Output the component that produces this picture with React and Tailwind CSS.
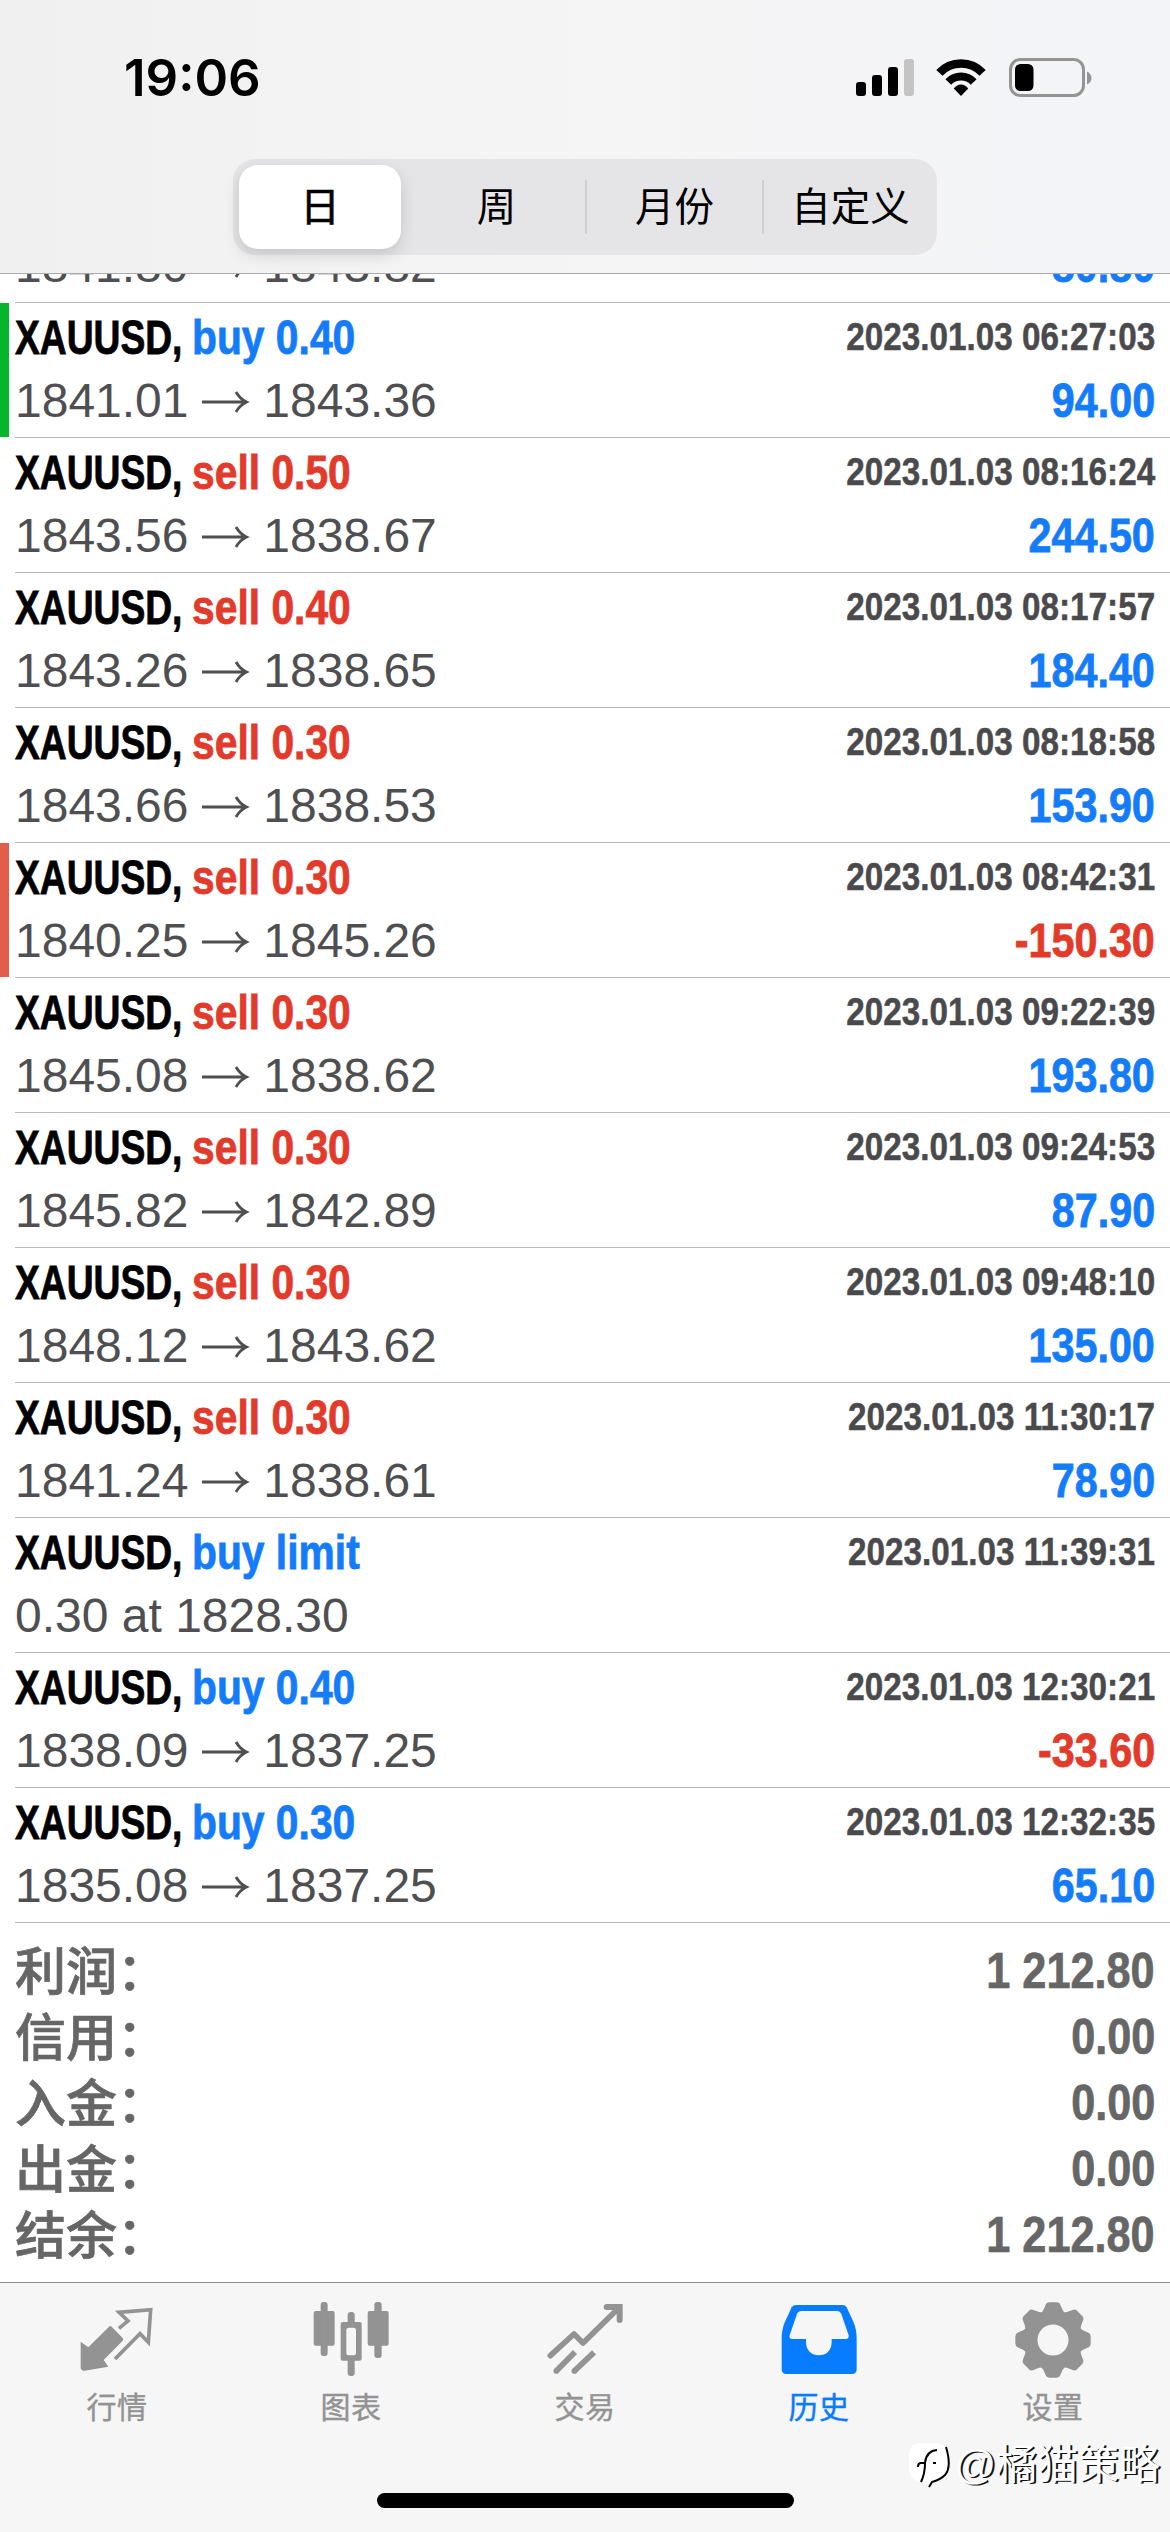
import React from "react";

const deals = [
    { action: "buy 0.40", side: "buy", open: "1841.80", close: "1843.82", time: "2023.01.03 06:26:14", profit: "80.80" },
    { action: "buy 0.40", side: "buy", open: "1841.01", close: "1843.36", time: "2023.01.03 06:27:03", profit: "94.00", mark: "tp" },
    { action: "sell 0.50", side: "sell", open: "1843.56", close: "1838.67", time: "2023.01.03 08:16:24", profit: "244.50" },
    { action: "sell 0.40", side: "sell", open: "1843.26", close: "1838.65", time: "2023.01.03 08:17:57", profit: "184.40" },
    { action: "sell 0.30", side: "sell", open: "1843.66", close: "1838.53", time: "2023.01.03 08:18:58", profit: "153.90" },
    { action: "sell 0.30", side: "sell", open: "1840.25", close: "1845.26", time: "2023.01.03 08:42:31", profit: "-150.30", mark: "sl" },
    { action: "sell 0.30", side: "sell", open: "1845.08", close: "1838.62", time: "2023.01.03 09:22:39", profit: "193.80" },
    { action: "sell 0.30", side: "sell", open: "1845.82", close: "1842.89", time: "2023.01.03 09:24:53", profit: "87.90" },
    { action: "sell 0.30", side: "sell", open: "1848.12", close: "1843.62", time: "2023.01.03 09:48:10", profit: "135.00" },
    { action: "sell 0.30", side: "sell", open: "1841.24", close: "1838.61", time: "2023.01.03 11:30:17", profit: "78.90" },
    { action: "buy limit", side: "buy", note: "0.30 at 1828.30", time: "2023.01.03 11:39:31" },
    { action: "buy 0.40", side: "buy", open: "1838.09", close: "1837.25", time: "2023.01.03 12:30:21", profit: "-33.60" },
    { action: "buy 0.30", side: "buy", open: "1835.08", close: "1837.25", time: "2023.01.03 12:32:35", profit: "65.10" },
];

const totals = [
    ["利润：", "1 212.80"],
    ["信用：", "0.00"],
    ["入金：", "0.00"],
    ["出金：", "0.00"],
    ["结余：", "1 212.80"],
];

export default function App() {
    return (
        <div className="relative flex h-[2532px] w-[1170px] flex-col overflow-hidden bg-white font-['Liberation_Sans','Noto_Sans_CJK_SC',sans-serif]">
            <header className="h-[274px] shrink-0 border-b border-[#ababad] bg-linear-to-r from-[#f0f0f1] via-[#f5f5f5] to-[#f3f4f8]">
                <StatusBar />
                <PeriodTabs />
            </header>
            {/* scrolled to the end, so the oldest row is cut by the header */}
            <main className="flex h-[2008px] shrink-0 flex-col justify-end overflow-hidden">
                {deals.map((deal) => (
                    <DealRow key={deal.time} deal={deal} />
                ))}
                <Totals />
            </main>
            <BottomNav />
            <Watermark />
        </div>
    );
}

function StatusBar() {
    return (
        <div className="flex h-[159px] items-start justify-between pl-[124px] pr-[78px] pt-[47px]">
            <span className="font-[Inter] text-[51px] font-semibold leading-[62px] text-black">19:06</span>
            <svg className="mt-[9px]" width="238" height="44" viewBox="854 56 238 44">
                <rect x="856" y="82" width="10" height="14" rx="3" />
                <rect x="872" y="75" width="10" height="21" rx="3" />
                <rect x="888" y="67" width="10" height="29" rx="3" />
                <rect x="904" y="59" width="10" height="37" rx="3" fill="#c4c4c4" />
                <path d="M939.4 72.9A29.5 29.5 0 0 1 982.6 72.9" fill="none" stroke="#000" strokeWidth="8.5" />
                <path d="M948.3 82A17.5 17.5 0 0 1 973.7 82" fill="none" stroke="#000" strokeWidth="8" />
                <path d="M961 96L953.8 88.6Q957 84.5 961 84.5T968.2 88.6Z" />
                <rect x="1010.5" y="59.5" width="73" height="36" rx="10" fill="none" stroke="#949495" strokeWidth="3" />
                <rect x="1015" y="64" width="18.5" height="27" rx="5.5" />
                <path d="M1087 71.5Q1091.500 74 1091.500 78T1087 84.500Z" fill="#949495" />
            </svg>
        </div>
    );
}

function PeriodTabs() {
    return (
        <div className="mx-auto flex h-24 w-[704px] items-center rounded-[22px] bg-[#e5e5e7] pl-[6px] text-[39.5px] leading-[60px] text-black">
            <div className="flex h-[84px] w-[162px] items-center justify-center rounded-[19px] bg-white shadow-[0_6px_16px_rgba(0,0,0,0.14)] [-webkit-text-stroke:0.7px_currentColor]">
                日
            </div>
            <div className="ml-[7px] w-[177px] text-center">周</div>
            <div className="h-[54px] w-[2px] bg-[#d0d0d3]" />
            <div className="w-[175px] text-center">月份</div>
            <div className="h-[54px] w-[2px] bg-[#d0d0d3]" />
            <div className="w-[173px] text-center">自定义</div>
        </div>
    );
}

function DealRow({ deal }) {
    const actionColor = deal.side === "buy" ? "text-[#157cf9]" : "text-[#e23a2b]";
    const loss = deal.profit && deal.profit.startsWith("-");
    return (
        <div className="flex h-[135px] shrink-0">
            <div className="w-[15px] shrink-0">
                {deal.mark === "tp" && <div className="h-[134px] w-[9px] bg-[#05b52c]" />}
                {deal.mark === "sl" && <div className="h-[134px] w-[9px] bg-[#e35d4c]" />}
            </div>
            <div className="flex-1 border-b border-[#b9b9bc] pr-[15px] pt-[3px]">
                <div className="flex h-[63px] justify-between whitespace-nowrap font-bold [-webkit-text-stroke:0.8px_currentColor]">
                    <div className="flex text-[48px] leading-[63px]">
                        <span className="w-[177px] origin-left scale-x-[0.775] text-black">XAUUSD,</span>
                        <span className={`origin-left scale-x-[0.85] ${actionColor}`}>{deal.action}</span>
                    </div>
                    <span className="origin-right scale-x-[0.853] text-[39px] leading-[62px] text-[#4a4a4d] [-webkit-text-stroke:0.5px_currentColor]">
                        {deal.time}
                    </span>
                </div>
                <div className="flex h-[63px] justify-between whitespace-nowrap text-[48px] leading-[63px]">
                    {deal.note ? (
                        <span className="text-[#4f4f52]">{deal.note}</span>
                    ) : (
                        <div className="flex items-center text-[#4f4f52]">
                            <span>{deal.open}</span>
                            <Arrow />
                            <span>{deal.close}</span>
                        </div>
                    )}
                    {deal.profit && (
                        <span
                            className={`origin-right scale-x-[0.86] font-bold [-webkit-text-stroke:0.8px_currentColor] ${loss ? "text-[#e23a2b]" : "text-[#157cf9]"}`}
                        >
                            {deal.profit}
                        </span>
                    )}
                </div>
            </div>
        </div>
    );
}

function Arrow() {
    return (
        <svg className="mx-[13.4px] mt-[2px]" width="48" height="24" viewBox="0 0 48 24" fill="none" stroke="currentColor" strokeWidth="2.8">
            <path d="M0 12H44M34 2Q38 9 44.500 12Q38 15 34 22" />
        </svg>
    );
}

function Totals() {
    return (
        <div className="h-[359px] shrink-0 pl-[15px] pr-[15px] pt-[15px] font-bold text-[#666]">
            {totals.map(([label, value]) => (
                <div key={label} className="flex h-[66px] justify-between whitespace-nowrap leading-[66px]">
                    <span className="pt-[2px] text-[51px] font-medium [-webkit-text-stroke:0.7px_currentColor]">{label}</span>
                    <span className="origin-right scale-x-[0.865] text-[50px] [-webkit-text-stroke:0.7px_currentColor]">{value}</span>
                </div>
            ))}
        </div>
    );
}

function BottomNav() {
    return (
        <nav className="h-[250px] shrink-0 border-t border-[#8c8c8e] bg-[#f6f6f6]">
            <div className="flex h-[210px] pt-[17px]">
                <NavItem label="行情" icon={<QuotesIcon />} />
                <NavItem label="图表" icon={<ChartIcon />} />
                <NavItem label="交易" icon={<TradeIcon />} />
                <NavItem label="历史" icon={<HistoryIcon />} active />
                <NavItem label="设置" icon={<GearIcon />} />
            </div>
            <div className="mx-auto h-[15px] w-[417px] rounded-full bg-black" />
        </nav>
    );
}

function NavItem({ label, icon, active }) {
    return (
        <div className={`flex w-[234px] flex-col items-center ${active ? "text-[#087cff]" : "text-[#939393]"}`}>
            {icon}
            <span className="mt-[6px] text-[30px] leading-[44px] tracking-[0.6px] [-webkit-text-stroke:0.4px_currentColor]">{label}</span>
        </div>
    );
}

// icons are drawn on a 240 grid, 3 units to a pixel
function QuotesIcon() {
    return (
        <svg width="80" height="80" viewBox="229 90 240 240" fill="currentColor">
            <path d="M240 215L263 232L325 170Q329 166 333 170L366 204Q370 208 366 212L309 270L323 290L252 302Q240 303 240 292Z" />
            <path d="M355 175L382 153L355 127L450 119L443 217L418 191L343 267" fill="none" stroke="currentColor" strokeWidth="11" />
        </svg>
    );
}

function ChartIcon() {
    return (
        <svg width="80" height="80" viewBox="931 90 240 240" fill="currentColor">
            <rect x="939" y="123" width="63" height="104" rx="6" />
            <rect x="960" y="96" width="21" height="162" rx="9" />
            <rect x="1020" y="156" width="63" height="116" rx="6" />
            <rect x="1041" y="126" width="21" height="192" rx="9" />
            <rect x="1037" y="173" width="29" height="83" rx="8" fill="#f6f6f6" />
            <rect x="1101" y="123" width="63" height="104" rx="6" />
            <rect x="1121" y="96" width="22" height="168" rx="9" />
        </svg>
    );
}

function TradeIcon() {
    return (
        <svg width="80" height="80" viewBox="313 90 240 240" fill="none" stroke="currentColor" strokeWidth="17">
            <path d="M329 257L400 192L427 219L535 113" strokeLinecap="round" strokeLinejoin="round" />
            <path d="M498 111H537V150" strokeLinecap="round" strokeWidth="18" />
            <path d="M346 304L403 246M400 304L460 247" />
            <circle cx="347" cy="303" r="8.500" fill="currentColor" stroke="none" />
            <circle cx="401" cy="303" r="8.500" fill="currentColor" stroke="none" />
        </svg>
    );
}

function HistoryIcon() {
    return (
        <svg width="80" height="80" viewBox="1015 90 240 240" fill="currentColor">
            <path d="M1066 105H1205Q1214 105 1218 112L1238 155Q1248 178 1248 205V298Q1248 312 1234 312H1037Q1023 312 1023 298V205Q1023 178 1033 155L1053 112Q1057 105 1066 105Z" />
            <path fill="#f6f6f6" d="M1083 123H1188Q1198 123 1202 132L1224 196Q1226 207 1214 207H1173V216C1173 242 1156 256 1135 256S1096 242 1096 216V207H1056Q1044 207 1047 196L1069 132Q1073 123 1083 123Z" />
        </svg>
    );
}

function GearIcon() {
    return (
        <svg width="80" height="80" viewBox="458 88 240 240" fill="currentColor">
            {[0, 45, 90, 135, 180, 225, 270, 315].map((deg) => (
                <path key={deg} transform={`rotate(${deg} 578 208)`} d="M538 132Q550 120 555 105Q558 95 567 95H589Q598 95 601 105Q606 120 618 132Z" />
            ))}
            <circle cx="578" cy="208" r="67" fill="none" stroke="currentColor" strokeWidth="41" />
        </svg>
    );
}

function Watermark() {
    return (
        <div className="absolute bottom-[37px] right-[10px] flex items-center whitespace-nowrap text-white">
            <svg width="44" height="48" viewBox="0 0 44 48">
                <path d="M13 2H30Q42 4 42 18V24Q42 36 31 39Q26 40 22 46L20 40H13Q2 39 2 28V14Q2 3 13 2Z" fill="#fff" />
                <path d="M39 6Q45 26 38 34Q33 39 25 41L22 46M14 41Q18 33 18 22Q19 10 30 9M11 26Q11 22 14 22H18M26 22H29" fill="none" stroke="#000" strokeWidth="2" />
            </svg>
            <span className="ml-[3px] text-[41px] leading-[60px] [text-shadow:2px_1px_0_#111]">@橘猫策略</span>
        </div>
    );
}
